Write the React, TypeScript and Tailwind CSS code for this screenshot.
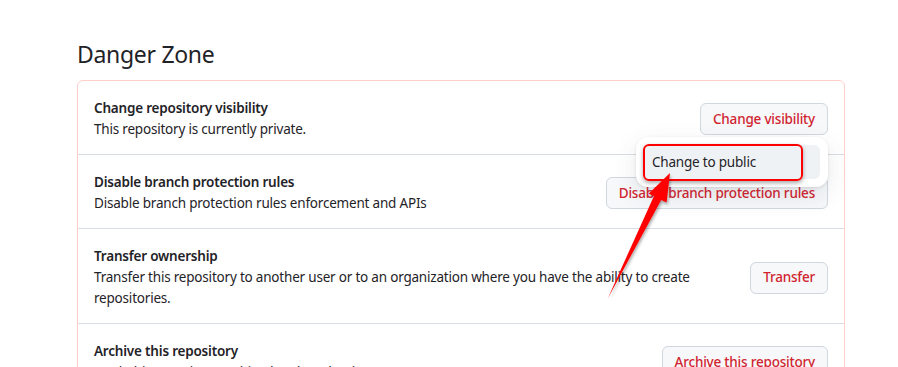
export default function App() {
  const rows = [
    {
      title: "Change repository visibility",
      desc: "This repository is currently private.",
      action: "Change visibility",
    },
    {
      title: "Disable branch protection rules",
      desc: "Disable branch protection rules enforcement and APIs",
      action: "Disable branch protection rules",
    },
    {
      title: "Transfer ownership",
      desc: "Transfer this repository to another user or to an organization where you have the ability to create repositories.",
      action: "Transfer",
    },
    {
      title: "Archive this repository",
      desc: "Mark this repository archived and read-only.",
      action: "Archive this repository",
    },
  ];

  return (
    <div
      className="relative w-[898px] h-[367px] overflow-hidden bg-white text-[#1f2328]"
      style={{ fontFamily: '"Noto Sans", "Open Sans", sans-serif' }}
    >
      <div className="ml-[77px] w-[768px] pt-[36px]">
        <h2 className="text-[23px] leading-[36px] tracking-[-0.3px] mb-[8px] font-normal">Danger Zone</h2>

        <div className="rounded-md border border-[#ffcecb]">
          {rows.map((row, i) => (
            <div
              key={row.title}
              className={
                "flex items-center justify-between gap-4 px-4 pt-[17px] pb-[14px] " +
                (i > 0 ? "border-t border-[#d8dee4]" : "")
              }
            >
              <div className="flex-1 text-[13.5px] leading-[21px] tracking-[-0.2px]">
                <div className="font-semibold">{row.title}</div>
                <div>{row.desc}</div>
              </div>
              <button className="h-8 shrink-0 rounded-md border border-[#d0d7de] bg-[#f6f8fa] px-3 text-[13.5px] tracking-[-0.2px] font-medium text-[#d1242f]">
                {row.action}
              </button>
            </div>
          ))}
        </div>
      </div>

      {/* visibility menu */}
      <div className="absolute left-[636px] top-[137px] w-[192px] rounded-xl bg-white p-2 shadow-[0_1px_3px_rgba(31,35,40,0.12),0_8px_24px_rgba(66,74,83,0.12)]">
        <div className="h-[34px] rounded-md bg-[#eff2f5] px-2 text-[13.5px] tracking-[-0.2px] leading-[34px]">
          Change to public
        </div>
      </div>

      {/* annotation highlight */}
      <div className="absolute left-[643px] top-[144px] h-[37px] w-[160px] rounded-md border-2 border-[#ff0000] shadow-[0_2px_4px_rgba(0,0,0,0.35)]" />

      {/* annotation arrow */}
      <svg className="absolute left-0 top-0" width="898" height="367">
        <defs>
          <filter id="sh" x="-20%" y="-20%" width="140%" height="140%">
            <feDropShadow dx="1" dy="2" stdDeviation="1.5" floodColor="#000" floodOpacity="0.35" />
          </filter>
        </defs>
        <polygon
          points="608,298 654,196 648.6,193.7 670,173 666.6,202.5 661.2,199.9"
          fill="#ff0000"
          filter="url(#sh)"
        />
      </svg>
    </div>
  );
}
